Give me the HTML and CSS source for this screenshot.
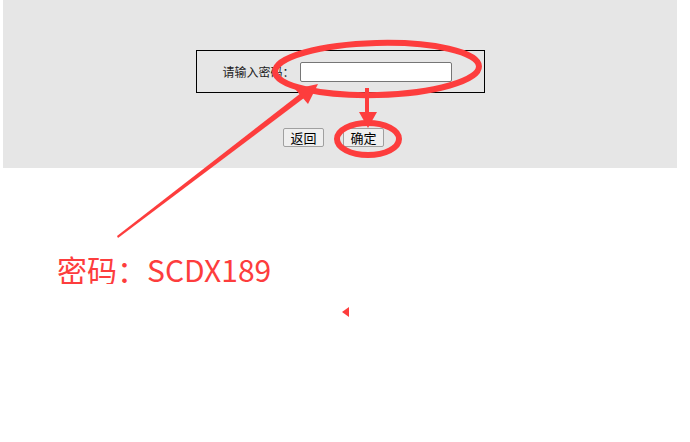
FILE: index.html
```html
<!DOCTYPE html>
<html lang="zh-CN">
<head>
  <meta charset="UTF-8">
  <meta name="viewport" content="width=device-width, initial-scale=1.0">
  <title>请输入密码</title>
  <link rel="stylesheet" href="styles.css">
</head>
<body>
  <main>
    <div class="panel">
      <div class="login-box">
        <label for="pwd">请输入密码<span class="colon">：</span></label>
        <input type="password" id="pwd">
      </div>
      <div class="actions">
        <button type="button" class="btn">返回</button>
        <button type="button" class="btn">确定</button>
      </div>
    </div>

    <p class="hint">密码<span class="colon">：</span>SCDX189</p>
  </main>

  <!-- screenshot markup -->
  <svg class="marks" width="690" height="442" viewBox="0 0 690 442">
    <ellipse cx="377" cy="69" rx="102" ry="26" transform="rotate(-1.5 377 69)" />
    <ellipse cx="368" cy="139" rx="31" ry="16" />
    <line x1="367" y1="88" x2="367" y2="114" />
    <polygon class="fill" points="359,112 377,112 368,128" />
    <polygon class="fill" points="117,236 118,238 304,98 301,93" />
    <polygon class="fill" points="318,84 295,89 308,104" />
    <polygon class="fill" points="342,312 349,307 349,317" />
  </svg>
</body>
</html>
```

FILE: styles.css
```css
* {
  box-sizing: border-box;
}

body {
  margin: 0;
  font-family: 'Noto Sans CJK SC', sans-serif;
  background: #fff;
}

main {
  padding: 0 13px 0 3px;
}

.panel {
  background-color: #e6e6e6;
  height: 168px;
  padding-top: 50px;
}

.login-box {
  width: 289px;
  height: 43px;
  margin: 0 auto;
  border: 1px solid #000;
  display: flex;
  align-items: center;
  gap: 5px;
  padding-left: 26px;
  font-size: 12px;
  color: #222;
}

.login-box input {
  width: 152px;
  height: 20px;
  margin: 0;
  border: 1px solid #767676;
  border-radius: 2px;
  background: #fff;
}

.colon {
  font-family: 'Noto Sans CJK TC', sans-serif;
}

.actions {
  display: flex;
  justify-content: center;
  gap: 19px;
  margin-top: 35px;
  padding-right: 13px;
}

.btn {
  width: 41px;
  height: 19px;
  padding: 0;
  font-family: 'Noto Sans CJK SC', sans-serif;
  font-size: 13px;
  line-height: 17px;
  color: #000;
  background-color: #efefef;
  border: 1px solid #a0a0a0;
  border-radius: 2px;
}

.hint {
  margin: 86px 0 0 54px;
  font-size: 30px;
  line-height: 30px;
  color: #fd3d3d;
}

.marks {
  position: absolute;
  top: 0;
  left: 0;
  pointer-events: none;
}

.marks ellipse,
.marks line {
  fill: none;
  stroke: #fd3d3d;
  stroke-width: 6;
}

.marks line {
  stroke-width: 4;
}

.marks .fill {
  fill: #fd3d3d;
}
```
